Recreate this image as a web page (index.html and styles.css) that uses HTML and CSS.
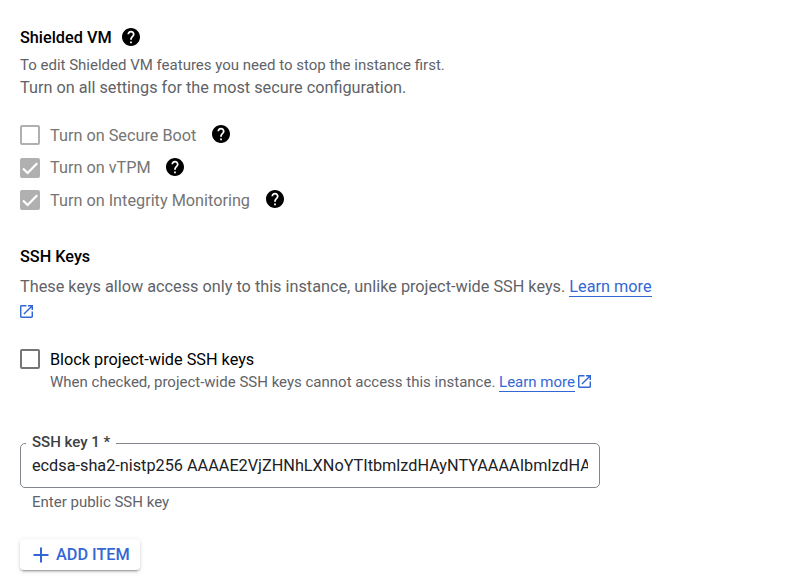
FILE: index.html
```html
<!DOCTYPE html>
<html lang="en">
<head>
<meta charset="utf-8">
<title>Security settings</title>
<link rel="stylesheet" href="styles.css">
</head>
<body>
<svg class="defs" width="0" height="0" aria-hidden="true">
  <symbol id="help" viewBox="2 2 20 20"><path d="M12 2C6.48 2 2 6.48 2 12s4.480 10 10 10 10-4.480 10-10S17.520 2 12 2zm1 17h-2v-2h2v2zm2.070-7.750l-.9.920C13.450 12.900 13 13.500 13 15h-2v-.5c0-1.100.45-2.100 1.170-2.830l1.240-1.260c.37-.36.59-.86.59-1.410 0-1.100-.9-2-2-2s-2 .9-2 2H8c0-2.210 1.790-4 4-4s4 1.790 4 4c0 .88-.36 1.680-.93 2.250z"/></symbol>
  <symbol id="open" viewBox="3 3 18 18"><path d="M19 19H5V5h7V3H5a2 2 0 0 0-2 2v14a2 2 0 0 0 2 2h14c1.100 0 2-.9 2-2v-7h-2v7zM14 3v2h3.590l-9.830 9.830 1.410 1.410L19 6.410V10h2V3h-7z"/></symbol>
  <symbol id="check" viewBox="0 0 20 20"><path d="M3 10.500L7.600 15 17.200 5.300" fill="none" stroke="#fff" stroke-width="2.2"/></symbol>
</svg>
<main class="panel">
  <section class="shielded">
    <h2 class="title">Shielded VM <svg class="help"><use href="#help"/></svg></h2>
    <p class="note">To edit Shielded VM features you need to stop the instance first.</p>
    <p class="text">Turn on all settings for the most secure configuration.</p>
    <div class="options">
      <div class="option"><span class="box"></span><span class="label">Turn on Secure Boot</span><svg class="help"><use href="#help"/></svg></div>
      <div class="option"><span class="box on"><svg><use href="#check"/></svg></span><span class="label">Turn on vTPM</span><svg class="help"><use href="#help"/></svg></div>
      <div class="option"><span class="box on"><svg><use href="#check"/></svg></span><span class="label">Turn on Integrity Monitoring</span><svg class="help"><use href="#help"/></svg></div>
    </div>
  </section>
  <section class="keys">
    <h2 class="title">SSH Keys</h2>
    <p class="text intro">These keys allow access only to this instance, unlike project-wide SSH keys. <a class="link">Learn more</a></p>
    <svg class="open"><use href="#open"/></svg>
    <div class="option block"><span class="box"></span><span class="label">Block project-wide SSH keys</span></div>
    <p class="note hint">When checked, project-wide SSH keys cannot access this instance. <a class="link">Learn more</a><svg class="open"><use href="#open"/></svg></p>
    <fieldset class="field">
      <legend>SSH key 1 *</legend>
      <div class="value">ecdsa-sha2-nistp256 AAAAE2VjZHNhLXNoYTItbmlzdHAyNTYAAAAIbmlzdHA</div>
    </fieldset>
    <p class="note helper">Enter public SSH key</p>
    <button class="add"><svg viewBox="0 0 16 16"><path d="M8 0.500v15M0.500 8h15"/></svg>ADD ITEM</button>
  </section>
</main>
</body>
</html>
```
FILE: styles.css
```css
* { box-sizing: border-box; }
body {
  margin: 0;
  height: 579px;
  overflow: hidden;
  background: #fff;
  color: #000;
  font-family: Roboto, "Liberation Sans", sans-serif;
}
p, h2 { margin: 0; white-space: nowrap; }
.defs { position: absolute; }
.panel { padding: 25px 20px 0; }
.title {
  display: flex;
  align-items: center;
  height: 24px;
  font-size: 16.25px;
  font-weight: 500;
}
.help { width: 18px; height: 18px; fill: #000; flex: none; }
.title .help { margin-left: 10px; }
.note { font-size: 15px; line-height: 22px; color: #5f6368; }
.text { font-size: 16.25px; line-height: 24px; color: #5f6368; }
.shielded .note { margin-top: 5px; }
.options { margin-top: 19px; }
.option { display: flex; align-items: center; height: 32.5px; }
.box {
  width: 20px;
  height: 20px;
  margin-right: 10px;
  flex: none;
  border: 2px solid #b0b0b0;
  border-radius: 2px;
}
.box svg { display: block; width: 20px; height: 20px; margin: -2px; }
.box.on { background: #b0b0b0; }
.label { font-size: 16.25px; line-height: 24px; color: #757575; }
.options .label { padding-top: 1px; }
.option .help { margin: -2px 0 0 15.6px; }
.keys { margin-top: 28px; }
.intro { margin-top: 6px; }
.link { color: #3367d6; border-bottom: 1px solid #3367d6; }
.open { display: block; width: 13px; height: 13px; margin-top: 6px; fill: #3367d6; }
.block { margin-top: 26px; }
.block .box { margin-top: -2px; border-color: #757575; }
.block .label { color: #000; }
.hint { display: flex; align-items: center; margin: -5px 0 0 30px; white-space: pre; }
.hint .link { line-height: 18px; }
.hint .open { margin: -2px 0 0 3px; }
.field {
  width: 580px;
  height: 55px;
  min-width: 0;
  margin: 40px 0 0;
  padding: 0 11px;
  border: 1px solid #80868b;
  border-radius: 5px;
}
.field legend {
  margin-left: -6px;
  padding: 0 6px 2px;
  font-size: 15px;
  font-weight: 500;
  line-height: 18px;
  color: #3c4043;
}
.value {
  margin-top: 1px;
  overflow: hidden;
  white-space: nowrap;
  font-size: 16.25px;
  line-height: 24px;
  color: #202124;
}
.helper { margin: 3px 0 0 12px; }
.add {
  display: flex;
  align-items: center;
  width: 120px;
  height: 31px;
  margin-top: 26px;
  padding: 0 0 0 13px;
  border: 0;
  border-radius: 4px;
  background: #fff;
  box-shadow: 0 3px 1px -2px rgba(0,0,0,.2), 0 2px 2px rgba(0,0,0,.14), 0 1px 5px rgba(0,0,0,.12);
  color: #3367d6;
  font: 500 16.25px/24px Roboto, sans-serif;
}
.add svg { width: 16px; height: 16px; margin-right: 7px; stroke: #3367d6; stroke-width: 2; }
```
